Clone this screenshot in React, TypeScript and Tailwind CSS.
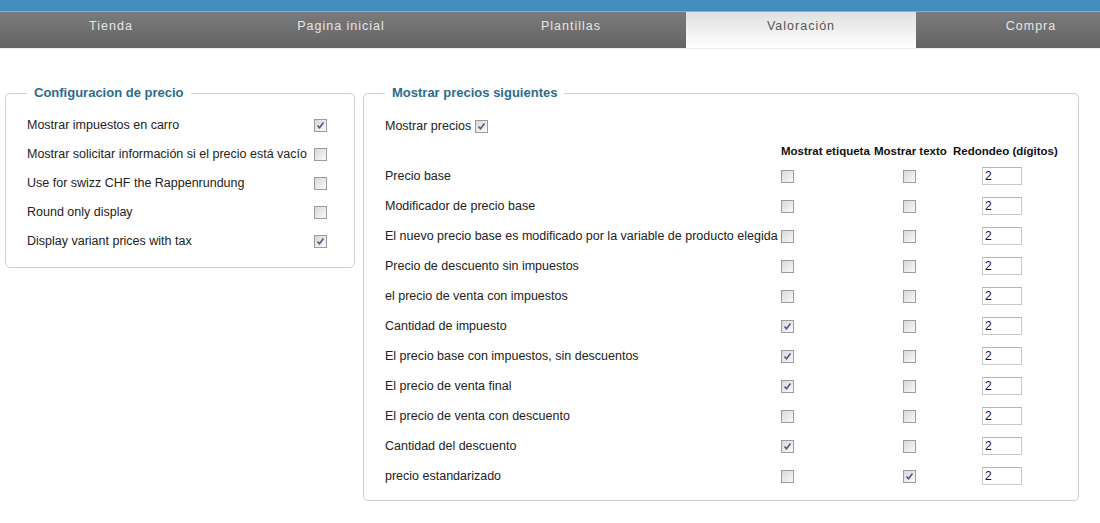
import React from "react";

const font = { fontFamily: '"Liberation Sans", Arial, sans-serif' };

function Check({ checked }: { checked?: boolean }) {
  return (
    <span className="inline-flex h-[13px] w-[13px] shrink-0 items-center justify-center border border-[#9c9c9c] bg-gradient-to-br from-[#d8d8d8] to-[#fafafa] align-middle">
      {checked && (
        <svg width="9" height="9" viewBox="0 0 9 9">
          <path d="M1.5 4.5 L3.5 6.8 L7.5 1.5" fill="none" stroke="#4b5a86" strokeWidth="1.6" />
        </svg>
      )}
    </span>
  );
}

function NumBox() {
  return (
    <span className="inline-flex h-[18px] w-[40px] items-center border border-[#c9c9c9] border-t-[#b5b5b5] bg-white pl-[2px] text-[12px] text-[#111]">
      2
    </span>
  );
}

const tabs = ["Tienda", "Pagina inicial", "Plantillas", "Valoración", "Compra"];

const leftRows: [string, boolean][] = [
  ["Mostrar impuestos en carro", true],
  ["Mostrar solicitar información si el precio está vacío", false],
  ["Use for swizz CHF the Rappenrundung", false],
  ["Round only display", false],
  ["Display variant prices with tax", true],
];

const rightRows: [string, boolean, boolean][] = [
  ["Precio base", false, false],
  ["Modificador de precio base", false, false],
  ["El nuevo precio base es modificado por la variable de producto elegida", false, false],
  ["Precio de descuento sin impuestos", false, false],
  ["el precio de venta con impuestos", false, false],
  ["Cantidad de impuesto", true, false],
  ["El precio base con impuestos, sin descuentos", true, false],
  ["El precio de venta final", true, false],
  ["El precio de venta con descuento", false, false],
  ["Cantidad del descuento", true, false],
  ["precio estandarizado", false, true],
];

export default function App() {
  return (
    <div className="h-[523px] w-[1100px] overflow-hidden bg-white text-[#222]" style={font}>
      <div className="h-[11px] bg-[#3f8ebd]" />
      <div className="h-[1px] bg-[#7fb0d3]" />
      <div className="flex h-[36px] overflow-hidden bg-gradient-to-b from-[#7b7b7b] to-[#646464]">
        <div className="ml-[-4px] flex">
          {tabs.map((t) => {
            const active = t === "Valoración";
            return (
              <div
                key={t}
                className={
                  active
                    ? "flex w-[230px] shrink-0 justify-center bg-gradient-to-b from-[#e0e0e0] to-white pt-[5px] text-[12.5px] tracking-[1px] text-[#555]"
                    : "flex w-[230px] shrink-0 justify-center pt-[5px] text-[12.5px] tracking-[1px] text-[#e6e6e6]"
                }
              >
                {t}
              </div>
            );
          })}
        </div>
      </div>
      <div className="h-[1px] bg-[#ececec]" />
      <div className="flex items-start pt-[36px] text-[12.5px]">
        <fieldset className="ml-[5px] w-[350px] rounded-[5px] border border-[#cfcfcf] px-[21px] pb-[11px]">
          <legend className="px-[7px] text-[13px] font-bold leading-[16px] text-[#2d6b8c]">Configuracion de precio</legend>
          <div className="pt-[10px]">
            {leftRows.map(([l, c]) => (
              <div key={l} className="grid h-[29px] grid-cols-[287px_13px] items-center">
                <span className="whitespace-nowrap">{l}</span>
                <Check checked={c} />
              </div>
            ))}
          </div>
        </fieldset>
        <fieldset className="ml-[8px] w-[716px] rounded-[5px] border border-[#cfcfcf] px-[21px] pb-[9px]">
          <legend className="px-[7px] text-[13px] font-bold leading-[16px] text-[#2d6b8c]">Mostrar precios siguientes</legend>
          <div className="flex h-[35px] items-center gap-[4px] pt-[15px]">
            <span>Mostrar precios</span>
            <Check checked />
          </div>
          <div className="mt-[7px] grid h-[18px] grid-cols-[396px_93px_79px_104px] items-center text-[11.5px] font-bold text-[#111]">
            <span />
            <span className="whitespace-nowrap">Mostrat etiqueta</span>
            <span className="whitespace-nowrap">Mostrar texto</span>
            <span className="whitespace-nowrap">Redondeo (dígitos)</span>
          </div>
          {rightRows.map(([l, a, b]) => (
            <div key={l} className="grid h-[30px] grid-cols-[396px_93px_79px_104px] items-center">
              <span className="whitespace-nowrap">{l}</span>
              <span className="flex">
                <Check checked={a} />
              </span>
              <span className="flex pl-[29px]">
                <Check checked={b} />
              </span>
              <span className="flex pl-[29px]">
                <NumBox />
              </span>
            </div>
          ))}
        </fieldset>
      </div>
    </div>
  );
}
